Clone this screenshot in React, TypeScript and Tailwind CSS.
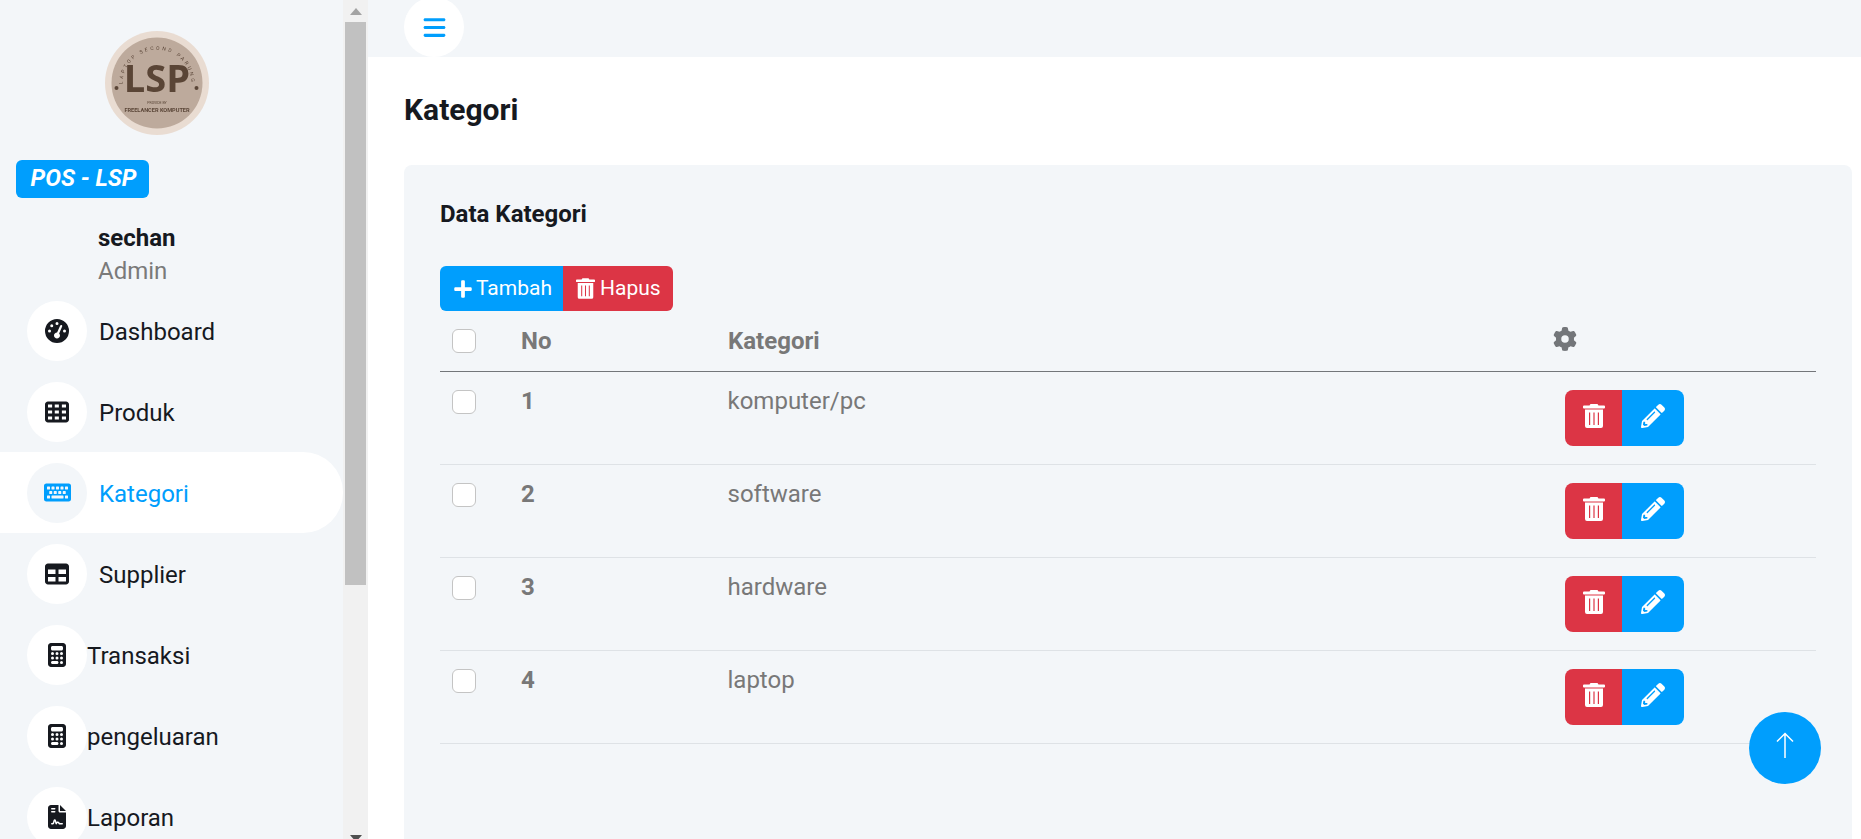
import { FaKeyboard, FaPencilAlt, FaPlus } from "react-icons/fa";
import { FaBars, FaCalculator, FaFileContract, FaGaugeHigh, FaGear, FaTable, FaTableCells } from "react-icons/fa6";
import type { ReactNode } from "react";

const navItems: { label: string; icon: ReactNode; tight?: boolean; active?: boolean }[] = [
  { label: "Dashboard", icon: <FaGaugeHigh size={24} /> },
  { label: "Produk", icon: <FaTableCells size={24} /> },
  { label: "Kategori", icon: <FaKeyboard size={27} />, active: true },
  { label: "Supplier", icon: <FaTable size={24} /> },
  { label: "Transaksi", icon: <FaCalculator size={24} />, tight: true },
  { label: "pengeluaran", icon: <FaCalculator size={24} />, tight: true },
  { label: "Laporan", icon: <FaFileContract size={24} />, tight: true },
];

const rows = [
  { no: 1, name: "komputer/pc" },
  { no: 2, name: "software" },
  { no: 3, name: "hardware" },
  { no: 4, name: "laptop" },
];

// lid with handle, body with three thin grooves
function TrashIcon({ className }: { className: string }) {
  return (
    <svg viewBox="0 0 22 24" className={className} fill="currentColor">
      <path d="M7.500 0 H14.500 L15.500 1.500 H21 Q22 1.500 22 2.500 V3.500 Q22 4.500 21 4.500 H1 Q0 4.500 0 3.500 V2.500 Q0 1.500 1 1.500 H6.500 Z" />
      <path
        fillRule="evenodd"
        d="M2 5.500 H20 V22 Q20 24 18 24 H4 Q2 24 2 22 Z M6 8.500 V21 H7.200 V8.500 Z M10.400 8.500 V21 H11.600 V8.500 Z M14.800 8.500 V21 H16 V8.500 Z"
      />
    </svg>
  );
}

function Logo() {
  return (
    <svg viewBox="0 0 104 104" className="h-[104px] w-[104px] blur-[0.3px]">
      <circle cx="52" cy="52" r="52" fill="#e9dcd2" />
      <circle cx="52" cy="52" r="45.500" fill="#bdaa9c" />
      <path id="logo-arc" d="M17.700 57 A34.500 34.500 0 1 1 86.300 57" fill="none" />
      <text fontSize="5" fill="#5b4638" letterSpacing="2.400" fontFamily="Roboto, sans-serif">
        <textPath href="#logo-arc" startOffset="50%" textAnchor="middle">
          LAPTOP SECOND PARUNG
        </textPath>
      </text>
      <circle cx="11.500" cy="57" r="2" fill="#5b4638" />
      <circle cx="91.500" cy="57" r="2" fill="#5b4638" />
      <text x="52" y="61" textAnchor="middle" fontSize="38" fontWeight="700" fill="#5a4536" fontFamily="'Open Sans', sans-serif">
        LSP
      </text>
      <text x="52" y="72.500" textAnchor="middle" fontSize="3.500" fill="#5b4638" fontFamily="Roboto, sans-serif">
        PROVIDE BY
      </text>
      <text x="52" y="81" textAnchor="middle" fontSize="5.600" fontWeight="700" fill="#5b4638" fontFamily="Roboto, sans-serif">
        FREELANCER KOMPUTER
      </text>
    </svg>
  );
}

function Sidebar() {
  return (
    <aside className="flex h-full w-[368px] shrink-0 bg-[#f3f6f9]">
      <div className="w-[343px] shrink-0 overflow-hidden">
        <div className="pt-[31px] pl-[105px]">
          <Logo />
        </div>
        <div className="mt-[25px] ml-4 flex h-[38px] w-[133px] items-center justify-center rounded-md bg-[#009efd] pl-[2px] text-[23.500px] font-bold text-white italic">
          POS - LSP
        </div>
        <div className="mt-[23px] pl-[98px]">
          <p className="text-[24px] leading-[34px] font-bold text-[#16191f]">sechan</p>
          <p className="text-[24px] leading-[33px] text-[#7a7a7a]">Admin</p>
        </div>
        <nav className="mt-[2px]">
          {navItems.map((item) => (
            <div
              key={item.label}
              className={`flex h-[81px] items-center pl-[27px] ${item.active ? "rounded-r-[40px] bg-white" : ""}`}
            >
              <span
                className={`flex h-[60px] w-[60px] shrink-0 items-center justify-center rounded-full ${
                  item.active ? "bg-[#f3f6f9] text-[#009efd]" : "bg-white text-[#16191f]"
                }`}
              >
                {item.icon}
              </span>
              <span
                className={`pt-[2px] text-[24px] ${item.tight ? "ml-0" : "ml-[12px]"} ${
                  item.active ? "text-[#009efd]" : "text-[#16191f]"
                }`}
              >
                {item.label}
              </span>
            </div>
          ))}
        </nav>
      </div>
      <div className="flex h-full w-[25px] shrink-0 flex-col items-center overflow-hidden bg-[#f1f1f1]">
        <div className="flex h-[22px] w-full items-center justify-center">
          <span className="h-0 w-0 border-x-[6px] border-b-[7px] border-x-transparent border-b-[#a3a3a3]" />
        </div>
        <div className="h-[563px] w-[21px] shrink-0 bg-[#c1c1c1]" />
        <div className="flex-1" />
        <div className="flex h-[4px] w-full justify-center">
          <span className="h-0 w-0 border-x-[6px] border-t-[7px] border-x-transparent border-t-[#505050]" />
        </div>
      </div>
    </aside>
  );
}

function RowCheckbox() {
  return <span className="block h-6 w-6 rounded-[6px] border border-[#c4c4c4] bg-white" />;
}

function Table() {
  return (
    <div>
      <div className="flex h-[61px] border-b-[1.500px] border-[#73767a] text-[24px] font-bold text-[#787878]">
        <div className="w-[81px] pt-[18px] pl-3">
          <RowCheckbox />
        </div>
        <div className="w-[207px] pt-[13px] leading-[34px]">No</div>
        <div className="w-[825px] pt-[13px] leading-[34px]">Kategori</div>
        <div className="pt-4">
          <FaGear size={24} className="text-[#73767a]" />
        </div>
      </div>
      {rows.map((row) => (
        <div key={row.no} className="flex h-[93px] border-b border-[#dee2e6] text-[24px] text-[#787878]">
          <div className="w-[81px] pt-[18px] pl-3">
            <RowCheckbox />
          </div>
          <div className="w-[206.500px] pt-[12px] leading-[34px] font-bold">{row.no}</div>
          <div className="w-[837.500px] pt-[12px] leading-[34px]">{row.name}</div>
          <div className="flex pt-[18px]">
            <button type="button" className="flex h-[56px] w-[57px] items-center justify-center rounded-l-lg bg-[#dc3545] text-white">
              <TrashIcon className="-mt-1 h-6 w-[22px]" />
            </button>
            <button type="button" className="flex h-[56px] w-[62px] items-center justify-center rounded-r-lg bg-[#009efd] text-white">
              <FaPencilAlt size={24} className="-mt-1" />
            </button>
          </div>
        </div>
      ))}
    </div>
  );
}

export default function App() {
  return (
    <div className="relative flex h-[839px] w-[1861px] overflow-hidden bg-white font-['Roboto',sans-serif]">
      <Sidebar />
      <main className="flex-1">
        <header className="flex h-[57px] items-end bg-[#f3f6f9] pl-[36px]">
          <button type="button" className="flex h-[60px] w-[60px] shrink-0 items-center justify-center rounded-full bg-white text-[#009efd]">
            <FaBars size={25} />
          </button>
        </header>
        <div className="pt-[33px] pl-[36px]">
          <h1 className="text-[30px] leading-[40px] font-bold text-[#16191f]">Kategori</h1>
        </div>
        <section className="mt-[35px] mr-[9px] ml-[36px] h-[700px] rounded-t-lg bg-[#f3f6f9] px-9 pt-[32px]">
          <h2 className="text-[24px] leading-[34px] font-bold text-[#16191f]">Data Kategori</h2>
          <div className="mt-[35px] flex h-[45px] text-[21px] text-white">
            <button type="button" className="flex w-[123px] items-center gap-[3px] rounded-l-md bg-[#009efd] pl-[13px]">
              <FaPlus size={20} />
              Tambah
            </button>
            <button type="button" className="flex w-[110px] items-center gap-[5px] rounded-r-md bg-[#dc3545] pl-[13px]">
              <TrashIcon className="h-[21px] w-[19px]" />
              Hapus
            </button>
          </div>
          <Table />
        </section>
      </main>
      <button
        type="button"
        className="absolute top-[712px] left-[1749px] flex h-[72px] w-[72px] items-center justify-center rounded-full bg-[#009efd] text-white"
      >
        <svg viewBox="0 0 18 26" className="-mt-[6px] h-[26px] w-[18px]" fill="none" stroke="currentColor" strokeWidth="1.500">
          <path d="M9 1 V26 M1 9.500 L9 1.500 L17 9.500" />
        </svg>
      </button>
    </div>
  );
}
